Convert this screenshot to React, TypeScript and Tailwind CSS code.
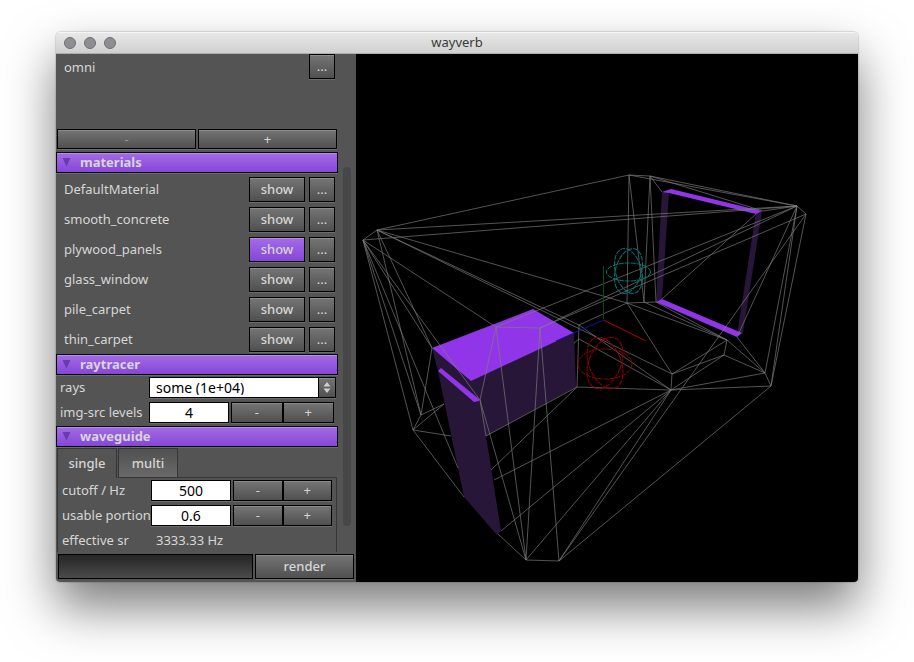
import { useState } from "react";
import type { ReactNode } from "react";

const bevel =
  "border border-black bg-linear-to-b from-[#757575] to-[#505050] text-[#d6d6d6] shadow-[inset_0_1px_0_#8a8a8a,0_1px_0_#6c6c6c]";
const purpleBevel =
  "border border-black bg-linear-to-b from-[#a56be6] to-[#8645d8] text-[#d6d6d6] shadow-[inset_0_1px_0_#b98af0,0_1px_0_#6c6c6c]";
const field =
  "h-[21px] w-20 shrink-0 border border-black bg-white text-center text-sm leading-none text-black outline-none shadow-[0_1px_0_#6c6c6c]";

function SectionHeader({ children }: { children: ReactNode }) {
  return (
    <h2 className="shrink-0">
      <button
        type="button"
        aria-expanded="true"
        className={`flex h-[21px] w-full items-center gap-[9px] px-[5px] font-bold ${purpleBevel}`}
      >
        <svg viewBox="0 0 9 9" className="size-[9px] shrink-0" aria-hidden="true">
          <path d="M0.500 0H8.500L4.500 8.500Z" fill="#6a3bb0" />
        </svg>
        {children}
      </button>
    </h2>
  );
}

function MaterialRow({ name, active, onShow }: { name: string; active: boolean; onShow: () => void }) {
  return (
    <li className="flex h-[30px] items-center gap-1 pr-[3px] pl-2">
      <span className="flex-1">{name}</span>
      <button
        type="button"
        aria-pressed={active}
        onClick={onShow}
        className={`h-[25px] w-14 font-medium leading-none ${active ? purpleBevel : bevel}`}
      >
        show
      </button>
      <button type="button" aria-label={`${name} options`} className={`h-[25px] w-[26px] leading-none ${bevel}`}>
        ...
      </button>
    </li>
  );
}

function Stepper({ id, label, initial }: { id: string; label: string; initial: string }) {
  const [value, setValue] = useState(initial);
  return (
    <div className="flex h-[25px] shrink-0 items-center pr-1">
      <label htmlFor={id} className="w-[89px] shrink-0 whitespace-nowrap">
        {label}
      </label>
      <input id={id} value={value} onChange={(e) => setValue(e.target.value)} className={field} />
      <div className="ml-[2px] flex flex-1">
        <button type="button" aria-label={`decrease ${label}`} className={`h-[21px] flex-1 leading-none ${bevel}`}>
          -
        </button>
        <button type="button" aria-label={`increase ${label}`} className={`h-[21px] flex-1 leading-none ${bevel}`}>
          +
        </button>
      </div>
    </div>
  );
}

const materials = ["DefaultMaterial", "smooth_concrete", "plywood_panels", "glass_window", "pile_carpet", "thin_carpet"];

function Sidebar() {
  const [shown, setShown] = useState("plywood_panels");
  const [rays, setRays] = useState("some (1e+04)");
  return (
    <aside className="flex w-[300px] shrink-0 flex-col bg-[#545454] text-[13px] leading-none text-[#d6d6d6]">
      <div className="flex min-h-0 flex-1 justify-between overflow-hidden pr-[5px]">
        <div className="flex w-[282px] flex-col">
          <div className="flex h-[75px] shrink-0 items-start pr-[3px] pl-2">
            <span className="flex-1 leading-[26px]">omni</span>
            <button type="button" aria-label="omni options" className={`h-[25px] w-[26px] leading-none ${bevel}`}>
              ...
            </button>
          </div>
          <div className="flex shrink-0 gap-[2px] px-px pb-[3px]">
            <button type="button" disabled aria-label="remove" className={`h-5 flex-1 leading-none ${bevel}`}>
              <span className="opacity-50">-</span>
            </button>
            <button type="button" aria-label="add" className={`h-5 flex-1 leading-none ${bevel}`}>
              +
            </button>
          </div>

          <SectionHeader>materials</SectionHeader>
          <ul className="shrink-0 pt-px">
            {materials.map((m) => (
              <MaterialRow key={m} name={m} active={shown === m} onShow={() => setShown(m)} />
            ))}
          </ul>

          <SectionHeader>raytracer</SectionHeader>
          <div className="shrink-0 pb-px pl-1">
            <div className="flex h-[25px] items-center pr-[2px]">
              <label htmlFor="rays" className="w-[89px]">
                rays
              </label>
              <div className="relative flex-1">
                <select
                  id="rays"
                  value={rays}
                  onChange={(e) => setRays(e.target.value)}
                  className="block h-[21px] w-full appearance-none border border-black bg-white pl-[6px] text-sm leading-none text-black shadow-[0_1px_0_#6c6c6c] outline-none"
                >
                  <option>some (1e+04)</option>
                </select>
                <span
                  className={`pointer-events-none absolute top-0 right-0 flex h-[21px] w-[18px] items-center justify-center ${bevel}`}
                >
                  <svg viewBox="0 0 8 11" className="h-[11px] w-2" aria-hidden="true">
                    <path d="M4 0L7.500 4.500H0.500ZM4 11L0.500 6.500H7.500Z" fill="#cfcfcf" />
                  </svg>
                </span>
              </div>
            </div>
            <Stepper id="levels" label="img-src levels" initial="4" />
          </div>

          <SectionHeader>waveguide</SectionHeader>
          <div className="flex flex-1 flex-col px-px pt-px">
            <div role="tablist" className="flex h-[30px] shrink-0">
              <button
                type="button"
                role="tab"
                aria-selected="true"
                className="w-[60px] border-t border-r border-l border-[#363636] font-medium leading-none"
              >
                single
              </button>
              <button
                type="button"
                role="tab"
                aria-selected="false"
                className="ml-px w-[60px] border border-[#363636] bg-linear-to-b from-[#505050] to-[#6a6a6a] font-medium leading-none"
              >
                multi
              </button>
              <span className="flex-1 border-b border-[#363636]" />
            </div>
            <div role="tabpanel" className="flex-1 border-x border-[#363636] pl-1">
              <Stepper id="cutoff" label="cutoff / Hz" initial="500" />
              <Stepper id="portion" label="usable portion" initial="0.6" />
              <dl className="flex h-6 items-center">
                <dt className="w-[94px]">effective sr</dt>
                <dd>3333.33 Hz</dd>
              </dl>
            </div>
          </div>
        </div>
        <div className="mt-[113px] mb-[26px] w-2 rounded-full bg-[#474747]" />
      </div>
      <div className="flex gap-[2px] pt-[2px] pr-[2px] pb-[3px] pl-[2px]">
        <div
          role="progressbar"
          aria-label="render progress"
          className="h-[25px] flex-1 border border-black bg-linear-to-b from-[#252525] to-[#4b4b4b]"
        />
        <button type="button" className={`h-[25px] w-[99px] font-medium leading-none ${bevel}`}>
          render
        </button>
      </div>
    </aside>
  );
}

const roomEdges =
  "M377 230L629 175L650 176L797 206L806 214L771 386M377 230L363 240M629 175L797 206M650 176L763 211M650 176L662 192M763 211L797 206" +
  "M377 230L797 206M363 240L797 206M496 327L797 206M540 328L797 206M540 328L806 214M806 214L559 561M797 206L738 335M797 206L765 373M797 206L771 386" +
  "M629 175L627 303L656 302M629 175L644 302M650 176L644 302M650 176L656 302M756 214L662 299" +
  "M377 230L627 303M377 230L579 325M377 230L672 374M579 325L627 303M579 325L671 390M579 325L577 387L671 390M574 343L579 339L671 390" +
  "M363 240L496 327L540 328M496 327L480 400M496 327L526 560M540 328L526 560M540 328L559 561M480 400L526 560L559 561L771 386" +
  "M363 240L413 430M363 240L421 415M363 240L432 348M363 240L480 400M363 240L458 468M377 230L421 415M377 230L432 348" +
  "M413 430L421 415L432 348M413 430L444 404M421 415L444 404M413 430L451 436M413 430L464 497M498 534L526 560" +
  "M671 390L494 480M671 390L501 531M671 390L526 560M671 390L559 561M577 387L491 470M577 387L486 436" +
  "M671 390L672 374L627 303M627 303L727 340M644 302L727 340M656 302L727 340M727 340L672 374M727 340L724 355L671 390M727 340L765 373M737 337L765 373M724 355L765 373L771 386M765 373L671 390L771 386M724 355L672 374M480 400L486 436";

function Viewport() {
  return (
    <main className="min-w-0 flex-1 bg-black">
      <svg viewBox="356 54 502 528" className="block size-full" role="img" aria-label="Room model">
        <g fill="#281639">
          <path d="M432 348L471 380L574 333L576 387L486 436L501 531L497 535L464 497L438 371Z" />
          <path d="M662 192L669 192L662 300L656 302Z" />
          <path d="M756 212L762 211L743 333L737 335Z" />
        </g>
        <g fill="#9035e8">
          <path d="M432 348L533 309L574 333L471 381Z" />
          <path d="M441 368L479 399L479 401L474 402L438 371Z" />
          <path d="M662 192L671 189L762 211L756 214L669 193Z" />
          <path d="M656 302L662 299L742 333L737 337Z" />
        </g>
        <g fill="none" strokeWidth="1">
          <path d={roomEdges} stroke="#808080" strokeOpacity="0.65" />
          <path d="M603.500 319V266" stroke="#0b4a0b" />
          <path d="M603.500 320L646 341" stroke="#b80000" />
          <path d="M603.500 320L556 341" stroke="#1010a8" />
          <g stroke="#007878" strokeDasharray="5 1">
            <ellipse cx="628.500" cy="272" rx="22" ry="9" />
            <ellipse cx="628.500" cy="271" rx="13" ry="23" transform="rotate(16 628.500 271)" />
            <ellipse cx="628.500" cy="271" rx="13" ry="23" transform="rotate(-16 628.500 271)" />
          </g>
          <g stroke="#900000" strokeDasharray="5 1">
            <ellipse cx="605" cy="364" rx="27" ry="15" />
            <ellipse cx="605" cy="363" rx="16" ry="27" transform="rotate(22 605 363)" />
            <ellipse cx="605" cy="363" rx="16" ry="27" transform="rotate(-22 605 363)" />
          </g>
        </g>
      </svg>
    </main>
  );
}

export default function App() {
  return (
    <div className="flex h-screen min-h-[662px] flex-col bg-white px-14 pt-8 pb-20 font-['Noto_Sans','Lucida_Grande',sans-serif]">
      <div className="flex min-h-0 flex-1 flex-col overflow-hidden rounded-t-[5px] rounded-b-[4px] shadow-[0_25px_50px_rgba(0,0,0,0.52),0_0_1px_1px_rgba(0,0,0,0.12)]">
        <header className="relative flex h-[22px] shrink-0 items-center justify-center border-b border-[#a9b0a9] bg-linear-to-b from-[#e9e9e9] to-[#d0d0d0] shadow-[inset_0_1px_0_#f6f6f6]">
          <div className="absolute left-2 flex gap-2">
            <button type="button" aria-label="Close" className="size-3 rounded-full border border-[#707074] bg-[#8e8d92]" />
            <button type="button" aria-label="Minimize" className="size-3 rounded-full border border-[#707074] bg-[#8e8d92]" />
            <button type="button" aria-label="Zoom" className="size-3 rounded-full border border-[#707074] bg-[#8e8d92]" />
          </div>
          <h1 className="text-[13px] leading-none text-[#3a3a3a]">wayverb</h1>
        </header>
        <div className="flex min-h-0 flex-1">
          <Sidebar />
          <Viewport />
        </div>
      </div>
    </div>
  );
}
